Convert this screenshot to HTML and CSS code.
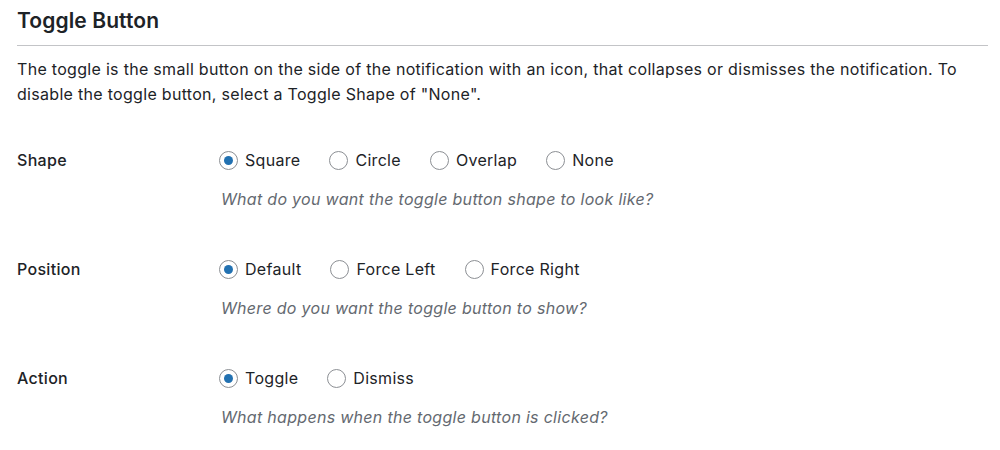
FILE: index.html
```html
<!DOCTYPE html>
<html>
<head>
<meta charset="utf-8">
<link rel="stylesheet" href="styles.css">
</head>
<body>
<div class="wrap">
  <h2 class="title">Toggle Button</h2>
  <p class="intro">The toggle is the small button on the side of the notification with an icon, that collapses or dismisses the notification. To disable the toggle button, select a Toggle Shape of "None".</p>
  <div class="form">
    <div class="row">
      <div class="label">Shape</div>
      <div class="field">
        <div class="options">
          <label class="opt"><span class="radio checked"></span>Square</label>
          <label class="opt"><span class="radio"></span>Circle</label>
          <label class="opt"><span class="radio"></span>Overlap</label>
          <label class="opt"><span class="radio"></span>None</label>
        </div>
        <p class="desc">What do you want the toggle button shape to look like?</p>
      </div>
    </div>
    <div class="row">
      <div class="label">Position</div>
      <div class="field">
        <div class="options">
          <label class="opt"><span class="radio checked"></span>Default</label>
          <label class="opt"><span class="radio"></span>Force Left</label>
          <label class="opt"><span class="radio"></span>Force Right</label>
        </div>
        <p class="desc">Where do you want the toggle button to show?</p>
      </div>
    </div>
    <div class="row">
      <div class="label">Action</div>
      <div class="field">
        <div class="options">
          <label class="opt"><span class="radio checked"></span>Toggle</label>
          <label class="opt"><span class="radio"></span>Dismiss</label>
        </div>
        <p class="desc">What happens when the toggle button is clicked?</p>
      </div>
    </div>
  </div>
</div>
</body>
</html>
```
FILE: styles.css
```css
html, body {
  margin: 0;
  padding: 0;
  background: #ffffff;
}
body {
  font-family: Inter, "Noto Sans", sans-serif;
  color: #1d2327;
  font-size: 16px;
  letter-spacing: 0.3px;
}
.wrap {
  padding: 0 12px 0 17px;
}
.title {
  margin: 0;
  padding: 8px 0 12px;
  font-size: 21px;
  line-height: 25px;
  font-weight: 600;
  letter-spacing: 0.1px;
  border-bottom: 1px solid #c3c4c7;
}
.intro {
  margin: 0;
  padding-top: 11px;
  line-height: 25px;
}
.form {
  margin-top: 40px;
  display: flex;
  flex-direction: column;
  gap: 45px;
}
.row {
  display: grid;
  grid-template-columns: 202px 1fr;
}
.label {
  font-weight: 500;
  line-height: 24px;
  padding-top: 1px;
}
.options {
  display: flex;
  gap: 29px;
  line-height: 24px;
  padding-top: 1px;
}
.opt {
  display: flex;
  align-items: center;
  gap: 7px;
}
.radio {
  box-sizing: border-box;
  width: 19px;
  height: 19px;
  border: 1px solid #8c8f94;
  border-radius: 50%;
  background: #fff;
  display: flex;
  align-items: center;
  justify-content: center;
}
.radio.checked::after {
  content: "";
  width: 9px;
  height: 9px;
  border-radius: 50%;
  background: #2271b1;
}
.desc {
  margin: 15px 0 0 2px;
  font-style: italic;
  color: #646970;
  line-height: 24px;
}
```
